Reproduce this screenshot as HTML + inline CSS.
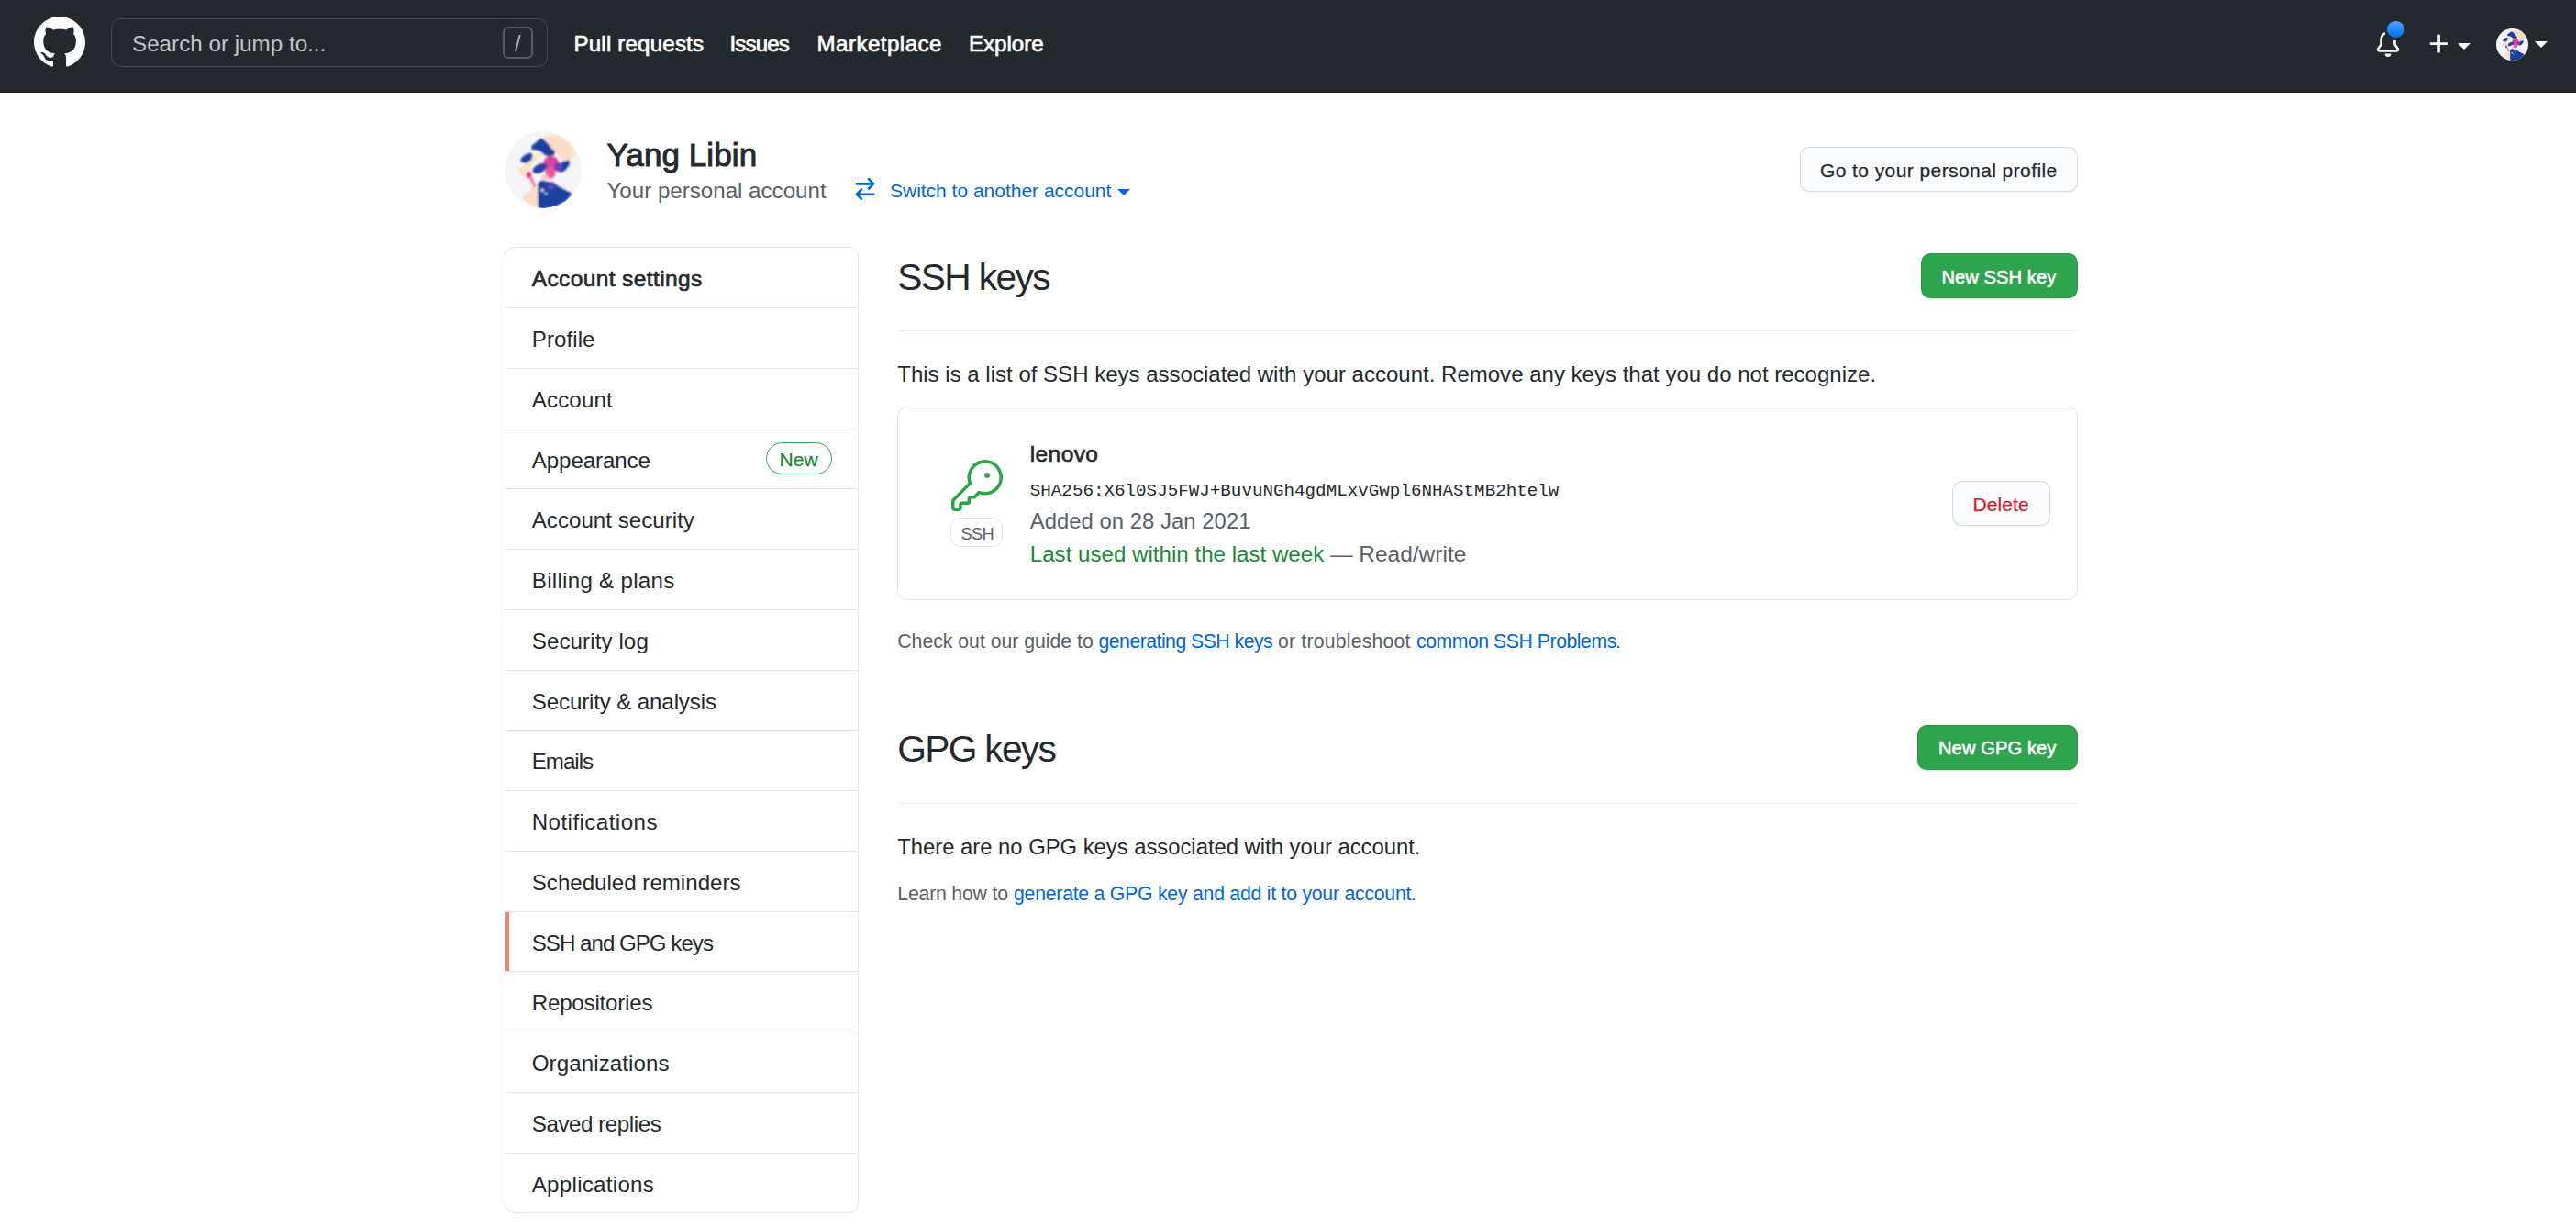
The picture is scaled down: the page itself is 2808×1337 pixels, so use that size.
<!DOCTYPE html>
<html lang="en">
<head>
<meta charset="utf-8">
<title>SSH and GPG keys</title>
<style>
*{box-sizing:border-box;margin:0;padding:0}
html,body{width:2808px;height:1337px;overflow:hidden;background:#fff}
body{position:relative;font-family:"Liberation Sans",sans-serif;color:#24292e}
.t{position:absolute;white-space:nowrap;display:block;text-decoration:none;font-style:normal}
.abs{position:absolute;display:block}
header{position:absolute;left:0;top:0;width:2808px;height:101px;background:#24292e;border-bottom:1px solid #191c20}
.search{position:absolute;left:121px;top:20px;width:476px;height:53px;border:1px solid #444d56;border-radius:10.5px;background:#24292e}
.slash{position:absolute;left:548px;top:29px;width:33px;height:35px;border:2px solid #555c63;border-radius:6px}
.btn{position:absolute;border:1px solid rgba(27,31,35,.15);border-radius:10.5px;background:#fafbfc;box-shadow:0 1.75px 0 rgba(27,31,35,.04)}
.btn.g{background:#2ea44f;border-color:rgba(27,31,35,.15);box-shadow:0 1.75px 0 rgba(27,31,35,.1)}
aside{position:absolute;left:550px;top:269px;width:386px;height:1053px;border:1px solid #e1e4e8;border-radius:10.5px;background:#fff}
.sep{position:absolute;left:551px;width:384px;height:1px;background:#e1e4e8}
.sel{position:absolute;left:551px;top:994px;width:4px;height:64px;background:#f9826c}
.rule{position:absolute;left:978px;width:1287px;height:1px;background:#eaecef}
.box{position:absolute;left:978px;top:443px;width:1287px;height:210.5px;border:1px solid #e1e4e8;border-radius:10.5px}
.lbl{position:absolute;left:1036px;top:564px;width:57px;height:32px;border:1px solid #e1e4e8;border-radius:10.5px}
.newb{position:absolute;left:834.9px;top:482.3px;width:71.8px;height:34.4px;border:1px solid #34a853;border-radius:18px}
</style>
</head>
<body>
<header>
  <svg class="abs" style="left:37px;top:17.7px" width="56" height="56" viewBox="0 0 16 16"><path fill="#fff" fill-rule="evenodd" d="M8 0C3.58 0 0 3.58 0 8c0 3.54 2.29 6.53 5.47 7.59.4.07.55-.17.55-.38 0-.19-.01-.82-.01-1.49-2.01.37-2.53-.49-2.69-.94-.09-.23-.48-.94-.82-1.13-.28-.15-.68-.52-.01-.53.63-.01 1.08.58 1.23.82.72 1.21 1.87.87 2.33.66.07-.52.28-.87.51-1.07-1.78-.2-3.64-.89-3.64-3.95 0-.87.31-1.59.82-2.15-.08-.2-.36-1.02.08-2.12 0 0 .67-.21 2.2.82.64-.18 1.32-.27 2-.27.68 0 1.36.09 2 .27 1.53-1.04 2.2-.82 2.2-.82.44 1.1.16 1.92.08 2.12.51.56.82 1.27.82 2.15 0 3.07-1.87 3.75-3.65 3.95.29.25.54.73.54 1.48 0 1.07-.01 1.93-.01 2.2 0 .21.15.46.55.38A8.013 8.013 0 0016 8c0-4.42-3.58-8-8-8z"/></svg>
  <div class="search"></div>
  <span class="t" id="h_search" style="left:144.00px;top:47.81px;font:400 24.2px/0 'Liberation Sans', sans-serif;color:#c3c6c9;letter-spacing:0.011px;">Search or jump to...</span>
  <div class="slash"></div>
  <span class="t" id="h_slash" style="left:561.00px;top:47.86px;font:400 23.5px/0 'Liberation Sans', sans-serif;color:#b0b4b8;letter-spacing:0.000px;">/</span>
  <nav>
  <a class="t" id="h_pull" style="left:625.50px;top:47.94px;font:400 24.13px/0 'Liberation Sans', sans-serif;color:#fff;letter-spacing:0.175px;-webkit-text-stroke:0.69px;">Pull requests</a>
  <a class="t" id="h_iss" style="left:795.50px;top:47.94px;font:400 24.13px/0 'Liberation Sans', sans-serif;color:#fff;letter-spacing:-0.860px;-webkit-text-stroke:0.69px;">Issues</a>
  <a class="t" id="h_mkt" style="left:890.50px;top:47.94px;font:400 24.13px/0 'Liberation Sans', sans-serif;color:#fff;letter-spacing:0.460px;-webkit-text-stroke:0.69px;">Marketplace</a>
  <a class="t" id="h_exp" style="left:1056.00px;top:47.94px;font:400 24.13px/0 'Liberation Sans', sans-serif;color:#fff;letter-spacing:-0.017px;-webkit-text-stroke:0.69px;">Explore</a>
  </nav>
  <svg class="abs" style="left:2589px;top:34px" width="28" height="28" viewBox="0 0 16 16"><path fill="#fff" d="M8 16a2 2 0 001.985-1.75c.017-.137-.097-.25-.235-.25h-3.5c-.138 0-.252.113-.235.25A2 2 0 008 16z"/><path fill="#fff" fill-rule="evenodd" d="M8 1.5A3.5 3.5 0 004.5 5v2.947c0 .346-.102.683-.294.97l-1.703 2.556a.018.018 0 00-.003.01l.001.006c0 .002.002.004.004.006a.017.017 0 00.006.004l.007.001h10.964l.007-.001a.016.016 0 00.006-.004.016.016 0 00.004-.006l.001-.007a.017.017 0 00-.003-.01l-1.703-2.554a1.75 1.75 0 01-.294-.97V5A3.5 3.5 0 008 1.5zM3 5a5 5 0 0110 0v2.947c0 .05.015.098.042.139l1.703 2.555A1.518 1.518 0 0113.482 13H2.518a1.518 1.518 0 01-1.263-2.36l1.703-2.554A.25.25 0 003 7.947V5z"/></svg>
  <div class="abs" style="left:2599px;top:19.5px;width:24.5px;height:24.5px;border-radius:50%;background:linear-gradient(#54a3ff,#006eed);border:3px solid #24292e"></div>
  <svg class="abs" style="left:2645.3px;top:34px" width="28" height="28" viewBox="0 0 16 16"><path fill="#fff" fill-rule="evenodd" d="M7.75 2a.75.75 0 01.75.75V7h4.25a.75.75 0 110 1.5H8.5v4.25a.75.75 0 11-1.5 0V8.5H2.75a.75.75 0 010-1.5H7V2.75A.75.75 0 017.75 2z"/></svg>
  <div class="abs" style="left:2678.8px;top:47px;border:7px solid transparent;border-top-color:#fff;border-bottom:0;width:0;height:0"></div>
  <svg class="abs" style="left:2721px;top:31px" width="35" height="35" viewBox="0 0 84 84"><use href="#av"/></svg>
  <div class="abs" style="left:2763.2px;top:44.8px;border:7px solid transparent;border-top-color:#fff;border-bottom:0;width:0;height:0"></div>
</header>

<svg width="0" height="0" style="position:absolute">
  <defs>
    <filter id="avb" x="-10%" y="-10%" width="120%" height="120%"><feGaussianBlur stdDeviation="0.9"/></filter>
    <clipPath id="avc"><circle cx="42" cy="42" r="42"/></clipPath>
    <g id="av" clip-path="url(#avc)">
      <rect width="84" height="84" fill="#f5f5f8"/>
      <g filter="url(#avb)">
      <path d="M43.8 5.2 L56.1 3.7 L71.4 12.9 L77.5 24.4 L71.4 31.3 L63.8 32.0 L55.3 22.1 L51.5 19.0 L46.9 12.9 L42.3 7.5Z" fill="#fbdcc6"/>
      <path d="M13.9 42.0 L21.6 36.6 L29.3 30.5 L31.6 25.9 L37.7 22.1 L41.5 25.9 L34.6 31.3 L28.5 38.9 L23.1 45.1 L17.8 48.9Z" fill="#fbe3c4"/>
      <path d="M25.4 53.5 L31.6 56.6 L36.6 58.9 L36.6 84.1 L27.7 79.5 L18.5 71.9 L27.0 65.7 L30.0 60.4Z" fill="#fbdcc6"/>
      <path d="M40.8 7.5 L46.9 12.9 L51.5 19.0 L55.3 22.1 L53.8 25.9 L48.4 27.4 L43.8 25.9 L40.8 23.6 L37.7 21.3 L34.6 20.5 L29.3 19.8 L29.3 15.9 L33.1 12.9 L36.9 9.8Z" fill="#1f3fa0"/>
      <path d="M17.8 29.7 L21.6 25.9 L28.5 23.6 L30.8 25.9 L29.3 31.3 L23.9 35.1 L17.8 33.6Z" fill="#1f3fa0"/>
      <ellipse cx="50.7" cy="35.1" rx="8.5" ry="8" fill="#dd3fa2"/>
      <ellipse cx="50.0" cy="45.1" rx="5.5" ry="6.5" fill="#f0529c"/>
      <ellipse cx="43.8" cy="50.4" rx="4" ry="3" fill="#f7c9c0"/>
      <path d="M63.8 32.8 L70.7 31.3 L70.7 36.6 L66.1 42.8 L61.5 45.1 L56.9 42.8 L58.4 38.2 L61.5 35.1Z" fill="#1f3fa0"/>
      <ellipse cx="58.4" cy="38.9" rx="4.5" ry="5" fill="#6a3fb4"/>
      <ellipse cx="38.5" cy="40.5" rx="8.6" ry="4.6" transform="rotate(-25 38.5 40.5)" fill="#2a3fa8"/>
      <ellipse cx="26.6" cy="47.4" rx="2.8" ry="3.6" fill="#ec3c78"/>
      <path d="M28.5 50.4 L33.1 60.4" stroke="#e0409f" stroke-width="2.2" fill="none"/>
      <path d="M36.2 56.6 L40.8 53.5 L46.9 55.0 L53.0 55.8 L59.2 60.4 L73.7 68.0 L66.8 76.5 L56.1 81.8 L42.3 84.9 L36.6 84.1Z" fill="#1f3fa0"/>
      <ellipse cx="50.0" cy="60.4" rx="4" ry="3" fill="#5a46bc"/>
      <circle cx="41.1" cy="64.2" r="1.8" fill="#e6dfd0"/>
      <circle cx="45.0" cy="68.0" r="1.6" fill="#a9c4ff"/>
      </g>
    </g>
  </defs>
</svg>

<section>
  <svg class="abs" style="left:550px;top:143px" width="84" height="84" viewBox="0 0 84 84"><use href="#av"/></svg>
  <h1 class="t" id="p_name" style="left:661.50px;top:168.87px;font:400 35.0px/0 'Liberation Sans', sans-serif;color:#24292e;letter-spacing:0.089px;-webkit-text-stroke:0.98px;">Yang Libin</h1>
  <span class="t" id="p_sub" style="left:661.50px;top:207.64px;font:400 24.13px/0 'Liberation Sans', sans-serif;color:#586069;letter-spacing:-0.005px;">Your personal account</span>
  <svg class="abs" style="left:929px;top:192px" width="28" height="28" viewBox="0 0 16 16"><path fill="#0366d6" fill-rule="evenodd" d="M5.22 14.78a.75.75 0 001.06-1.06L4.56 12h8.69a.75.75 0 000-1.5H4.56l1.72-1.72a.75.75 0 00-1.06-1.06l-3 3a.75.75 0 000 1.06l3 3zm5.56-6.5a.75.75 0 11-1.06-1.06l1.72-1.72H2.75a.75.75 0 010-1.5h8.69L9.72 2.28a.75.75 0 011.06-1.06l3 3a.75.75 0 010 1.06l-3 3z"/></svg>
  <a class="t" id="p_switch" style="left:970.00px;top:207.62px;font:400 21.0px/0 'Liberation Sans', sans-serif;color:#0366d6;letter-spacing:-0.012px;">Switch to another account</a>
  <div class="abs" style="left:1218px;top:206px;border:7px solid transparent;border-top-color:#0366d6;border-bottom:0;width:0;height:0"></div>
  <div class="btn" style="left:1962.4px;top:160.4px;width:302.2px;height:48.3px"></div>
  <a class="t" id="p_btn" style="left:1984.00px;top:185.92px;font:500 21.0px/0 'Liberation Sans', sans-serif;color:#24292e;letter-spacing:0.415px;-webkit-text-stroke:0.25px;">Go to your personal profile</a>
</section>

<aside></aside>
<nav>

<div class="sep" style="top:335px"></div>
<div class="sep" style="top:401px"></div>
<div class="sep" style="top:467px"></div>
<div class="sep" style="top:532px"></div>
<div class="sep" style="top:598px"></div>
<div class="sep" style="top:664px"></div>
<div class="sep" style="top:730px"></div>
<div class="sep" style="top:795px"></div>
<div class="sep" style="top:861px"></div>
<div class="sep" style="top:927px"></div>
<div class="sep" style="top:993px"></div>
<div class="sep" style="top:1058px"></div>
<div class="sep" style="top:1124px"></div>
<div class="sep" style="top:1190px"></div>
<div class="sep" style="top:1256px"></div>
<div class="sel"></div>
<h3 class="t" id="s0" style="left:579.75px;top:304.29px;font:400 24.5px/0 'Liberation Sans', sans-serif;color:#24292e;letter-spacing:0.380px;-webkit-text-stroke:0.69px;">Account settings</h3>
<a class="t" id="s1" style="left:579.75px;top:370.16px;font:400 24.13px/0 'Liberation Sans', sans-serif;color:#24292e;letter-spacing:0.067px;">Profile</a>
<a class="t" id="s2" style="left:579.75px;top:435.91px;font:400 24.13px/0 'Liberation Sans', sans-serif;color:#24292e;letter-spacing:0.133px;">Account</a>
<a class="t" id="s3" style="left:579.75px;top:501.66px;font:400 24.13px/0 'Liberation Sans', sans-serif;color:#24292e;letter-spacing:-0.100px;">Appearance</a>
<div class="newb"></div>
<span class="t" id="s_new" style="left:849.50px;top:500.62px;font:500 21.0px/0 'Liberation Sans', sans-serif;color:#22863a;letter-spacing:0.100px;-webkit-text-stroke:0.25px;">New</span>
<a class="t" id="s4" style="left:579.75px;top:567.41px;font:400 24.13px/0 'Liberation Sans', sans-serif;color:#24292e;letter-spacing:0.013px;">Account security</a>
<a class="t" id="s5" style="left:579.75px;top:633.16px;font:400 24.13px/0 'Liberation Sans', sans-serif;color:#24292e;letter-spacing:0.286px;">Billing &amp; plans</a>
<a class="t" id="s6" style="left:579.75px;top:698.91px;font:400 24.13px/0 'Liberation Sans', sans-serif;color:#24292e;letter-spacing:0.091px;">Security log</a>
<a class="t" id="s7" style="left:579.75px;top:764.66px;font:400 24.13px/0 'Liberation Sans', sans-serif;color:#24292e;letter-spacing:-0.144px;">Security &amp; analysis</a>
<a class="t" id="s8" style="left:579.75px;top:830.41px;font:400 24.13px/0 'Liberation Sans', sans-serif;color:#24292e;letter-spacing:-1.000px;">Emails</a>
<a class="t" id="s9" style="left:579.75px;top:896.16px;font:400 24.13px/0 'Liberation Sans', sans-serif;color:#24292e;letter-spacing:0.442px;">Notifications</a>
<a class="t" id="s10" style="left:579.75px;top:961.91px;font:400 24.13px/0 'Liberation Sans', sans-serif;color:#24292e;letter-spacing:-0.011px;">Scheduled reminders</a>
<a class="t" id="s11" style="left:579.75px;top:1027.66px;font:400 24.13px/0 'Liberation Sans', sans-serif;color:#24292e;letter-spacing:-1.000px;">SSH and GPG keys</a>
<a class="t" id="s12" style="left:579.75px;top:1093.41px;font:400 24.13px/0 'Liberation Sans', sans-serif;color:#24292e;letter-spacing:-0.218px;">Repositories</a>
<a class="t" id="s13" style="left:579.75px;top:1159.16px;font:400 24.13px/0 'Liberation Sans', sans-serif;color:#24292e;letter-spacing:0.083px;">Organizations</a>
<a class="t" id="s14" style="left:579.75px;top:1224.91px;font:400 24.13px/0 'Liberation Sans', sans-serif;color:#24292e;letter-spacing:-0.433px;">Saved replies</a>
<a class="t" id="s15" style="left:579.75px;top:1290.66px;font:400 24.13px/0 'Liberation Sans', sans-serif;color:#24292e;letter-spacing:0.273px;">Applications</a>
</nav>

<main>
  <h2 class="t" id="m_ssh" style="left:978.25px;top:302.08px;font:400 40.74px/0 'Liberation Sans', sans-serif;color:#24292e;letter-spacing:-1.643px;">SSH keys</h2>
  <div class="btn g" style="left:2094px;top:276px;width:171px;height:49px"></div>
  <a class="t" id="m_newssh" style="left:2116.50px;top:302.00px;font:400 20.2px/0 'Liberation Sans', sans-serif;color:#fff;letter-spacing:0.030px;-webkit-text-stroke:0.59px;">New SSH key</a>
  <div class="rule" style="top:360px"></div>
  <p class="t" id="m_desc" style="left:978.25px;top:408.37px;font:400 24.04px/0 'Liberation Sans', sans-serif;color:#24292e;letter-spacing:-0.004px;">This is a list of SSH keys associated with your account. Remove any keys that you do not recognize.</p>
  <div class="box"></div>
  <svg class="abs" style="left:1036.5px;top:501px" width="56" height="56" viewBox="0 0 24 24"><path fill="#28a745" fill-rule="evenodd" d="M16.75 8.5a1.25 1.25 0 100-2.5 1.25 1.25 0 000 2.5z"/><path fill="#28a745" fill-rule="evenodd" d="M15.75 0a8.25 8.25 0 00-7.851 10.79L.513 18.178A1.75 1.75 0 000 19.414v2.836C0 23.217.784 24 1.75 24h1.5A1.75 1.75 0 005 22.25v-1a.25.25 0 01.25-.25h2.735a.75.75 0 00.545-.22l.214-.213A.875.875 0 009 19.948V18.5a.25.25 0 01.25-.25h1.086c.464 0 .91-.184 1.237-.513l1.636-1.636A8.25 8.25 0 1015.75 0zM9 8.25a6.75 6.75 0 114.288 6.287.75.75 0 00-.804.168l-1.971 1.972a.25.25 0 01-.177.073H9.25A1.75 1.75 0 007.5 18.5v1H5.25a1.75 1.75 0 00-1.75 1.75v1a.25.25 0 01-.25.25h-1.5a.25.25 0 01-.25-.25v-2.836a.25.25 0 01.073-.177l7.722-7.721a.75.75 0 00.168-.804A6.73 6.73 0 019 8.25z"/></svg>
  <div class="lbl"></div>
  <span class="t" id="k_sshlbl" style="left:1047.50px;top:582.47px;font:400 18.27px/0 'Liberation Sans', sans-serif;color:#586069;letter-spacing:-0.650px;">SSH</span>
  <strong class="t" id="k_name" style="left:1122.75px;top:495.31px;font:400 24.5px/0 'Liberation Sans', sans-serif;color:#24292e;letter-spacing:0.400px;-webkit-text-stroke:0.69px;">lenovo</strong>
  <code class="t" id="k_sha" style="left:1122.75px;top:534.65px;font:400 19.19px/0 'Liberation Mono', monospace;color:#24292e;letter-spacing:0.018px;">SHA256:X6l0SJ5FWJ+BuvuNGh4gdMLxvGwpl6NHAStMB2htelw</code>
  <span class="t" id="k_added" style="left:1122.75px;top:568.04px;font:400 23.83px/0 'Liberation Sans', sans-serif;color:#586069;letter-spacing:0.047px;">Added on 28 Jan 2021</span>
  <span class="t" id="k_last" style="left:1122.75px;top:603.94px;font:400 24.14px/0 'Liberation Sans', sans-serif;color:#22863a;letter-spacing:0.000px;">Last used within the last week</span>
  <span class="t" id="k_rw" style="left:1450.00px;top:603.81px;font:400 24.5px/0 'Liberation Sans', sans-serif;color:#586069;letter-spacing:-0.009px;">— Read/write</span>
  <div class="btn" style="left:2128px;top:524px;width:107px;height:49px"></div>
  <a class="t" id="k_del" style="left:2150.50px;top:549.62px;font:500 21.0px/0 'Liberation Sans', sans-serif;color:#cb2431;letter-spacing:0.080px;-webkit-text-stroke:0.25px;">Delete</a>
  <span class="t" id="n1a" style="left:978.25px;top:699.23px;font:400 21.27px/0 'Liberation Sans', sans-serif;color:#586069;letter-spacing:-0.024px;">Check out our guide to</span>
  <a class="t" id="n1b" style="left:1197.50px;top:699.23px;font:400 21.27px/0 'Liberation Sans', sans-serif;color:#0366d6;letter-spacing:-0.533px;">generating SSH keys</a>
  <span class="t" id="n1c" style="left:1393.00px;top:699.23px;font:400 21.27px/0 'Liberation Sans', sans-serif;color:#586069;letter-spacing:0.186px;">or troubleshoot</span>
  <a class="t" id="n1d" style="left:1544.00px;top:699.23px;font:400 21.27px/0 'Liberation Sans', sans-serif;color:#0366d6;letter-spacing:-0.478px;">common SSH Problems</a>
  <span class="t" id="n1e" style="left:1761.00px;top:699.23px;font:400 21.27px/0 'Liberation Sans', sans-serif;color:#586069;letter-spacing:0.000px;">.</span>
  <h2 class="t" id="m_gpg" style="left:978.25px;top:815.68px;font:400 40.74px/0 'Liberation Sans', sans-serif;color:#24292e;letter-spacing:-1.714px;">GPG keys</h2>
  <div class="btn g" style="left:2090px;top:790px;width:175px;height:49px"></div>
  <a class="t" id="m_newgpg" style="left:2113.00px;top:815.32px;font:400 20.15px/0 'Liberation Sans', sans-serif;color:#fff;letter-spacing:0.080px;-webkit-text-stroke:0.59px;">New GPG key</a>
  <div class="rule" style="top:875px"></div>
  <p class="t" id="m_nogpg" style="left:978.25px;top:923.35px;font:400 23.82px/0 'Liberation Sans', sans-serif;color:#24292e;letter-spacing:-0.006px;">There are no GPG keys associated with your account.</p>
  <span class="t" id="n2a" style="left:978.25px;top:973.83px;font:400 21.27px/0 'Liberation Sans', sans-serif;color:#586069;letter-spacing:-0.200px;">Learn how to</span>
  <a class="t" id="n2b" style="left:1105.00px;top:973.83px;font:400 21.27px/0 'Liberation Sans', sans-serif;color:#0366d6;letter-spacing:-0.252px;">generate a GPG key and add it to your account</a>
  <span class="t" id="n2c" style="left:1538.00px;top:973.83px;font:400 21.27px/0 'Liberation Sans', sans-serif;color:#586069;letter-spacing:0.000px;">.</span>
</main>
</body>
</html>
